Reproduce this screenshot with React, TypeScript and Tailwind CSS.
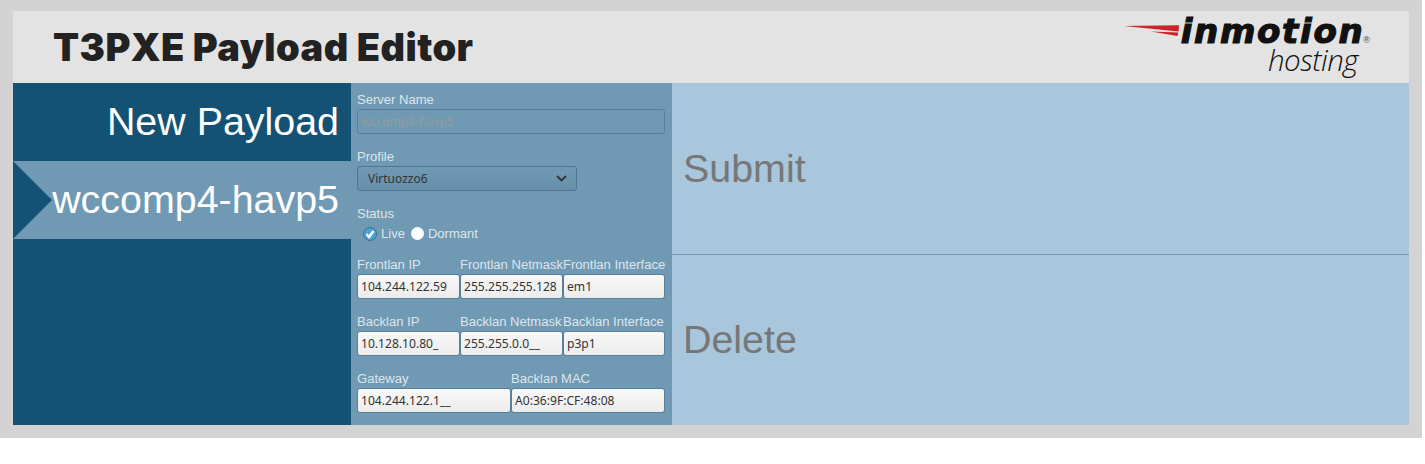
import type { ReactNode } from "react";

const fieldClass =
  "h-[25px] w-full rounded-[3px] border border-[#5a7f99] bg-gradient-to-b from-[#f8f8f8] to-[#ececec] px-[3px] font-['Noto_Sans',sans-serif] text-[12.1px] leading-[23px] text-[#333] whitespace-nowrap overflow-hidden";

function Field({ label, children }: { label: string; children: ReactNode }) {
  return (
    <div className="min-w-0">
      <div className="h-[18px] whitespace-nowrap text-[13.05px] leading-[18px] text-[#dde6ec]">{label}</div>
      {children}
    </div>
  );
}

function TextField({ label, value }: { label: string; value: string }) {
  return (
    <Field label={label}>
      <div className={fieldClass}>{value}</div>
    </Field>
  );
}

function Logo() {
  return (
    <div className="flex flex-col items-end self-start pt-[5px] pr-[39px]">
      <div className="flex h-[29px] items-start">
        <svg width="58" height="14" viewBox="0 0 58 14" className="mt-[8px] shrink-0">
          <path d="M1 2 L56 1.2 L55.6 7.5 Z" fill="#cc2229" />
          <path d="M28 7.5 L55.2 8.5 L54.6 12 Z" fill="#cc2229" />
        </svg>
        <span className="font-['DejaVu_Sans',sans-serif] text-[34px] leading-[30px] font-bold italic tracking-[1.7px] text-[#111] [-webkit-text-stroke:1.2px_#111]">
          inmotion
        </span>
        <span className="mt-[20px] -ml-[1px] text-[9px] leading-[9px] text-[#444]">®</span>
      </div>
      <div className="mr-[12px] font-['Open_Sans',sans-serif] text-[29.5px] leading-[29px] font-light italic tracking-[-0.5px] text-[#111]">
        hosting
      </div>
    </div>
  );
}

export default function App() {
  return (
    <div className="min-h-[464px] bg-white font-['Liberation_Sans',sans-serif]">
      <div className="w-[1422px] bg-[#d3d3d3] pt-[11px] pr-[13px] pb-[13px] pl-[13px]">
        <header className="flex h-[72px] items-center justify-between bg-[#e3e3e3]">
          <h1 className="pl-[40px] font-['Inter',sans-serif] text-[38px] leading-none font-black tracking-[0.45px] text-[#222]">
            T3PXE Payload Editor
          </h1>
          <Logo />
        </header>
        <div className="flex h-[342px]">
          <nav className="w-[338px] shrink-0 bg-[#145275] text-right text-[39.4px] leading-[77px] text-white">
            <div className="h-[78px] pr-[12px]">New Payload</div>
            <div className="relative h-[78px] bg-[#7099b4] pr-[12px]">
              <div className="absolute top-0 left-0 h-[78px] w-[39px] bg-[#145275] [clip-path:polygon(0_0,100%_50%,0_100%)]" />
              wccomp4-havp5
            </div>
          </nav>
          <form className="flex w-[321px] shrink-0 flex-col gap-[14px] bg-[#7099b4] pt-[8px] pr-[7px] pl-[6px]">
            <Field label="Server Name">
              <div className="h-[25px] rounded-[3px] border border-[#5a7f99] bg-[#7099b4] px-[3px] font-['Noto_Sans',sans-serif] text-[12.1px] leading-[23px] text-[#979a9c]">
                wccomp4-havp5
              </div>
            </Field>
            <Field label="Profile">
              <div className="flex h-[25px] w-[220px] items-center justify-between rounded-[3px] border border-[#52768f] bg-gradient-to-b from-[#7099b4] to-[#6690ab] pr-[9px] pl-[10px] font-['Noto_Sans',sans-serif] text-[12px] text-[#333]">
                Virtuozzo6
                <svg width="11" height="7" viewBox="0 0 11 7">
                  <path d="M1 1 L5.5 5.5 L10 1" fill="none" stroke="#333" strokeWidth="1.8" />
                </svg>
              </div>
            </Field>
            <div>
              <div className="h-[18px] text-[13.05px] leading-[18px] text-[#dde6ec]">Status</div>
              <div className="flex h-[19px] items-center pt-[2px] pl-[6px] text-[13.05px] text-[#dde6ec]">
                <svg width="14" height="14" viewBox="0 0 14 14" className="mr-[4px]">
                  <circle cx="7" cy="7" r="6.5" fill="#4aa3d6" stroke="#3a6f90" />
                  <path d="M3.5 7 L6 10 L10.5 4" fill="none" stroke="#fff" strokeWidth="2.4" />
                </svg>
                Live
                <span className="mr-[4px] ml-[6px] h-[13px] w-[13px] rounded-full bg-white" />
                Dormant
              </div>
            </div>
            <div className="grid grid-cols-[103px_103px_102px]">
              <TextField label="Frontlan IP" value="104.244.122.59" />
              <TextField label="Frontlan Netmask" value="255.255.255.128" />
              <TextField label="Frontlan Interface" value="em1" />
            </div>
            <div className="grid grid-cols-[103px_103px_102px]">
              <TextField label="Backlan IP" value="10.128.10.80_" />
              <TextField label="Backlan Netmask" value="255.255.0.0__" />
              <TextField label="Backlan Interface" value="p3p1" />
            </div>
            <div className="grid grid-cols-2">
              <TextField label="Gateway" value="104.244.122.1__" />
              <TextField label="Backlan MAC" value="A0:36:9F:CF:48:08" />
            </div>
          </form>
          <div className="flex min-w-0 flex-1 flex-col bg-[#a8c6dc] text-[39.4px] text-[#777]">
            <div className="flex h-[172px] items-center border-b border-[#6f98b3] pl-[11px]">Submit</div>
            <div className="flex flex-1 items-center pb-[1px] pl-[11px]">Delete</div>
          </div>
        </div>
      </div>
    </div>
  );
}
